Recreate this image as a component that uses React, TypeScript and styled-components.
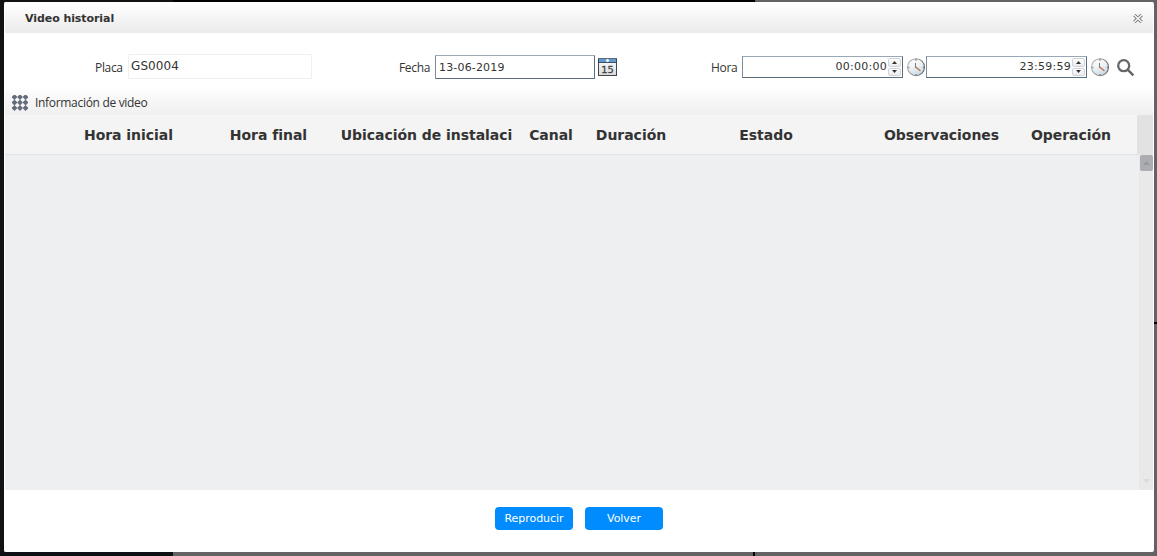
import React from 'react';
import styled, { createGlobalStyle } from 'styled-components';

const Global = createGlobalStyle`
  * { box-sizing: border-box; }
  html, body, #root { height: 100%; margin: 0; }
  body { overflow: hidden; font-family: "DejaVu Sans", Verdana, sans-serif; color: #333; }
`;

const Backdrop = styled.div`
  height: 556px;
  width: 1157px;
  padding: 2px 3px 4px 4px;
  background:
    linear-gradient(#111214, #111214) 0 0 / 4px 552px no-repeat,
    linear-gradient(#111214, #111214) 0 0 / 173px 2px no-repeat,
    linear-gradient(#000, #000) 173px 0 / 582px 2px no-repeat,
    linear-gradient(#0f1013, #0f1013) 0 552px / 173px 4px no-repeat,
    linear-gradient(#000, #000) 753px 552px / 2px 4px no-repeat,
    linear-gradient(#000, #000) 1154px 322px / 3px 2px no-repeat,
    #636363;
`;

const Dialog = styled.section`
  height: 550px;
  padding: 0 1px;
  display: flex;
  flex-direction: column;
  background: #fff;
  border-radius: 2px;
`;

const TitleBar = styled.header`
  height: 31px;
  flex: none;
  display: flex;
  align-items: center;
  justify-content: space-between;
  padding: 2px 10px 0 20px;
  background: linear-gradient(#fff, #ebebeb);
`;

const Title = styled.h1`
  margin: 0;
  font-size: 11px;
  line-height: 14px;
  letter-spacing: -0.07px;
`;

const Filters = styled.div`
  height: 53px;
  flex: none;
  display: flex;
  align-items: flex-start;
  padding-top: 20px;
`;

const Label = styled.label<{ $left: number; $width: number }>`
  margin-left: ${(p) => p.$left}px;
  width: ${(p) => p.$width}px;
  padding-top: 7px;
  font: 12px/16px "Open Sans", "Noto Sans", sans-serif;
  letter-spacing: -0.34px;
  white-space: nowrap;
`;

const PlateField = styled.div`
  width: 184px;
  height: 25px;
  margin-top: 1px;
  padding: 3px 2px;
  border: 1px solid #f0f0f0;
  font-size: 12px;
  line-height: 16px;
  letter-spacing: 0.1px;
`;

const DateField = styled.div`
  width: 160px;
  height: 24px;
  margin-top: 2px;
  padding: 4px 3px;
  border: 1px solid;
  border-color: #9cabb8 #5b6e80 #5b6e80 #7c8d9c;
  border-radius: 1px;
  font-size: 11px;
  line-height: 15px;
  letter-spacing: 0.17px;
`;

const TimeField = styled.div`
  width: 161px;
  height: 22px;
  margin-top: 3px;
  padding-right: 1px;
  display: flex;
  justify-content: flex-end;
  border: 1px solid;
  border-color: #99a8b7 #5b6e80 #5b6e80 #7c8d9c;
  font-size: 11px;
  line-height: 19px;
  letter-spacing: 0.27px;
`;

const Spinner = styled.span`
  width: 13px;
  height: 18px;
  margin: 1px 0 0 1px;
  display: flex;
  flex-direction: column;
  gap: 1px;
`;

const SpinButton = styled.span`
  flex: 1;
  display: flex;
  align-items: center;
  justify-content: center;
  border: 1px solid #d0d3da;
  border-radius: 2px;
  background: linear-gradient(#fff, #ececee);
`;

const Slot = styled.span<{ $left: number; $top: number }>`
  display: flex;
  flex: none;
  margin: ${(p) => p.$top}px 0 0 ${(p) => p.$left}px;
`;

const SectionBar = styled.div`
  height: 29px;
  flex: none;
  display: flex;
  align-items: center;
  padding: 4px 0 0 7px;
  gap: 7px;
  font: 12px/16px "Open Sans", "Noto Sans", sans-serif;
  letter-spacing: -0.31px;
  background: linear-gradient(#fff, #efefef);
`;

const HeaderRow = styled.div`
  height: 40px;
  flex: none;
  display: grid;
  grid-template-columns: 53px 141px 139px 177px 72px 88px 182px 169px 90px 1fr 16px;
  background: #f4f4f4;
  border-bottom: 1px solid #e2e2e2;
`;

const HeaderCell = styled.div`
  padding-top: 1px;
  font-size: 14px;
  font-weight: bold;
  line-height: 39px;
  height: 39px;
  text-align: center;
  white-space: nowrap;
  letter-spacing: -0.04px;
`;

const HeaderCorner = styled.div`
  background: #e2e2e2;
  grid-column: 11;
`;

const TableBody = styled.div`
  height: 335px;
  flex: none;
  display: flex;
  justify-content: flex-end;
  background: #eeeff1;
`;

const ScrollTrack = styled.div`
  width: 14px;
  display: flex;
  flex-direction: column;
  align-items: flex-end;
  justify-content: space-between;
  padding-bottom: 7px;
  background: #e9e9e9;
`;

const ScrollThumb = styled.div`
  width: 13px;
  height: 16px;
  display: flex;
  align-items: center;
  justify-content: center;
  background: #acadb0;
  border-radius: 2px;
`;

const ScrollDown = styled.div`
  width: 13px;
  display: flex;
  justify-content: center;
`;

const Footer = styled.footer`
  flex: 1;
  display: flex;
  gap: 12px;
  padding: 17px 0 0 490px;
`;

const Button = styled.button`
  width: 78px;
  height: 23px;
  padding: 1px 0 0;
  border: 0;
  border-radius: 4px;
  background: #008cff;
  color: #fff;
  font: 11px/22px "DejaVu Sans", Verdana, sans-serif;
  letter-spacing: -0.05px;
`;

const Triangle = ({ up, color, w = 5 }: { up?: boolean; color: string; w?: number }) => (
  <svg width={w} height={w > 5 ? 4 : 3} viewBox="0 0 6 3" preserveAspectRatio="none">
    <path d={up ? 'M0 3L3 0L6 3Z' : 'M0 0L3 3L6 0Z'} fill={color} />
  </svg>
);

const CalendarIcon = () => (
  <svg width="19" height="18" viewBox="0 0 19 18">
    <defs>
      <linearGradient id="page" x2="0" y2="1">
        <stop offset="0" stopColor="#fff" />
        <stop offset="1" stopColor="#d5d8dc" />
      </linearGradient>
    </defs>
    <rect x=".5" y=".5" width="18" height="17" fill="url(#page)" stroke="#444548" />
    <rect x="1" y="1" width="17" height="3" fill="#5f9bd0" />
    <path d="M0 .5H19" stroke="#606a74" />
    <path d="M1 4.5H18" stroke="#3f5063" />
    <path d="M8 2.5H11M9.5 1V4" stroke="#fff" strokeWidth="1.4" />
    <text x="9.6" y="15" textAnchor="middle" fontSize="9.5" fontFamily="DejaVu Sans" fill="#444" stroke="#444" strokeWidth=".3" textLength="12.5" lengthAdjust="spacingAndGlyphs">15</text>
  </svg>
);

const ClockIcon = () => (
  <svg width="19" height="19" viewBox="0 0 19 19">
    <defs>
      <linearGradient id="face" x2=".4" y2="1">
        <stop offset="0" stopColor="#fff" />
        <stop offset=".5" stopColor="#f1f4f6" />
        <stop offset="1" stopColor="#cbdde9" />
      </linearGradient>
      <linearGradient id="rim" x2="1" y2=".2">
        <stop offset="0" stopColor="#b9b9b9" />
        <stop offset="1" stopColor="#6f6f6f" />
      </linearGradient>
    </defs>
    <circle cx="9" cy="9.2" r="8.5" fill="url(#face)" stroke="url(#rim)" strokeWidth="1.1" />
    <path d="M9 1.2V2.8M9 16V17.5M1.2 9.5H2.4M15.8 9.5H17" stroke="#858585" strokeWidth="1.5" />
    <path d="M8.5 5V9.8" stroke="#75797d" />
    <path d="M8.5 9L13.4 12.7" stroke="#c06e48" strokeWidth="1.4" />
  </svg>
);

const SearchIcon = () => (
  <svg width="18" height="18" viewBox="0 0 18 18" fill="none" stroke="#646765">
    <circle cx="6.7" cy="6.7" r="5.5" strokeWidth="2.3" />
    <path d="M10.6 10.6L16.4 16.4" strokeWidth="2.5" />
  </svg>
);

const CloseIcon = () => (
  <svg width="10" height="9" viewBox="0 0 10 9">
    <path d="M1.3 1L8.7 8M8.7 1L1.3 8" stroke="#7a7a7a" strokeWidth="3.3" />
    <path d="M1.3 1L8.7 8M8.7 1L1.3 8" stroke="#fafafa" strokeWidth="1.5" />
  </svg>
);

const GridIcon = () => (
  <svg width="16" height="16" viewBox="0 0 16 16" fill="#666b7b">
    {[2, 7.5, 13].map((y) =>
      [2.5, 8, 13.5].map((x) => (
        <path key={`${x}-${y}`} d={`M${x - 2.9} ${y}L${x} ${y - 2.9}L${x + 2.9} ${y}L${x} ${y + 2.9}Z`} />
      )),
    )}
  </svg>
);

const TimeInput = ({ value }: { value: string }) => (
  <TimeField>
    {value}
    <Spinner>
      <SpinButton><Triangle up color="#333" /></SpinButton>
      <SpinButton><Triangle color="#333" /></SpinButton>
    </Spinner>
  </TimeField>
);

const columns = [
  'Hora inicial',
  'Hora final',
  'Ubicación de instalaci',
  'Canal',
  'Duración',
  'Estado',
  'Observaciones',
  'Operación',
];

export default function App() {
  return (
    <>
      <Global />
      <Backdrop>
        <Dialog>
          <TitleBar>
            <Title>Video historial</Title>
            <CloseIcon />
          </TitleBar>
          <Filters>
            <Label $left={90} $width={33}>Placa</Label>
            <PlateField>GS0004</PlateField>
            <Label $left={87} $width={36}>Fecha</Label>
            <DateField>13-06-2019</DateField>
            <Slot $left={3} $top={5}><CalendarIcon /></Slot>
            <Label $left={94} $width={31}>Hora</Label>
            <TimeInput value="00:00:00" />
            <Slot $left={4} $top={5}><ClockIcon /></Slot>
            <TimeInput value="23:59:59" />
            <Slot $left={4} $top={5}><ClockIcon /></Slot>
            <Slot $left={7} $top={6}><SearchIcon /></Slot>
          </Filters>
          <SectionBar>
            <GridIcon />
            Información de video
          </SectionBar>
          <HeaderRow>
            <div />
            {columns.map((name) => (
              <HeaderCell key={name}>{name}</HeaderCell>
            ))}
            <HeaderCorner />
          </HeaderRow>
          <TableBody>
            <ScrollTrack>
              <ScrollThumb><Triangle up color="#98999c" w={7} /></ScrollThumb>
              <ScrollDown><Triangle color="#dcdcdc" w={7} /></ScrollDown>
            </ScrollTrack>
          </TableBody>
          <Footer>
            <Button>Reproducir</Button>
            <Button>Volver</Button>
          </Footer>
        </Dialog>
      </Backdrop>
    </>
  );
}
